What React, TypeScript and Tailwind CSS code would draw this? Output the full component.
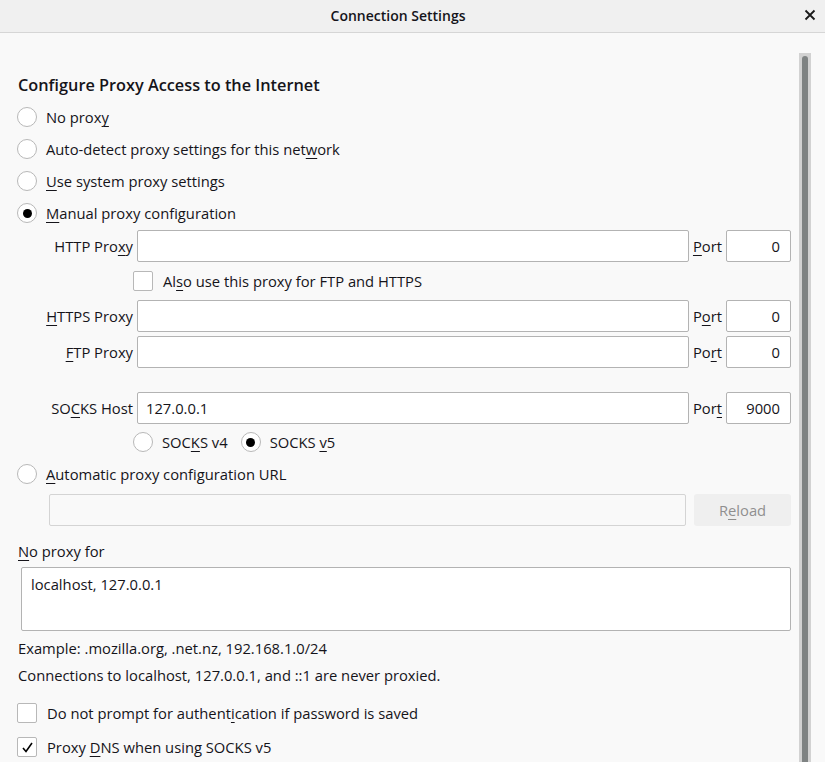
import React from "react";

const U = ({ children }: { children: React.ReactNode }) => (
  <span className="underline decoration-1 underline-offset-[3px]">{children}</span>
);

const Radio = ({ checked = false }: { checked?: boolean }) => (
  <span className="flex h-[20px] w-[20px] shrink-0 items-center justify-center rounded-full border border-[#b8b8b8] bg-white">
    {checked && <span className="h-[9px] w-[9px] rounded-full bg-black" />}
  </span>
);

const Check = ({ checked = false }: { checked?: boolean }) => (
  <span className="flex h-[20px] w-[20px] shrink-0 items-center justify-center rounded-[2px] border border-[#b8b8b8] bg-white">
    {checked && (
      <svg width="13" height="13" viewBox="0 0 13 13">
        <path d="M2 7 L5 10.5 L11 2" fill="none" stroke="#000" strokeWidth="1.6" />
      </svg>
    )}
  </span>
);

const Input = ({ value = "", right = false, w = "flex-1" }: { value?: string; right?: boolean; w?: string }) => (
  <div
    className={`${w} flex h-[32px] items-center rounded-[2px] border border-[#b3b3b3] bg-white px-[8px] ${
      right ? "justify-end pr-[10px]" : ""
    }`}
  >
    {value}
  </div>
);

const ProxyRow = ({
  label,
  port,
  value = "",
  portLabel,
  className = "",
}: {
  label: React.ReactNode;
  port: string;
  value?: string;
  portLabel: React.ReactNode;
  className?: string;
}) => (
  <div className={`flex h-[32px] items-center ${className}`}>
    <div className="w-[120px] shrink-0 pr-[4px] text-right">{label}</div>
    <Input value={value} />
    <div className="px-[4px]">{portLabel}</div>
    <Input value={port} right w="w-[65px]" />
  </div>
);

export default function App() {
  return (
    <div
      className="h-[762px] w-[825px] overflow-hidden bg-[#f9f9f9] text-[14.75px] text-[#15141a]"
      style={{ fontFamily: '"Open Sans", "Noto Sans", sans-serif' }}
    >
      <div className="flex h-[33px] items-center border-b border-[#d6d6d6] bg-[#f0f0f0] pb-[2px]">
        <div className="flex-1 text-center text-[14px] font-semibold">Connection Settings</div>
        <div className="flex w-[29px] items-center justify-center pr-[2px]">
          <svg width="12" height="12" viewBox="0 0 12 12">
            <path d="M1.5 1.5 L10.5 10.5 M10.5 1.5 L1.5 10.5" stroke="#1a1a1a" strokeWidth="1.8" />
          </svg>
        </div>
      </div>
      <div className="flex h-[729px]">
        <div className="flex-1 pl-[17px] pr-[8px] pt-[36px]">
          <div className="flex h-[32px] items-center pl-[1px] text-[16.3px] font-semibold">
            Configure Proxy Access to the Internet
          </div>
          {[
            { l: <>No prox<U>y</U></>, c: false },
            { l: <>Auto-detect proxy settings for this net<U>w</U>ork</>, c: false },
            { l: <><U>U</U>se system proxy settings</>, c: false },
            { l: <><U>M</U>anual proxy configuration</>, c: true },
          ].map((r, i) => (
            <div key={i} className="flex h-[32px] items-center gap-[9px]">
              <Radio checked={r.c} />
              <span>{r.l}</span>
            </div>
          ))}
          <ProxyRow
            className="mt-[1px]"
            label={<>HTTP Pro<U>x</U>y</>}
            port="0"
            portLabel={<><U>P</U>ort</>}
          />
          <div className="flex h-[38px] items-center gap-[10px] pl-[116px]">
            <Check />
            <span>Al<U>s</U>o use this proxy for FTP and HTTPS</span>
          </div>
          <ProxyRow label={<><U>H</U>TTPS Proxy</>} port="0" portLabel={<>P<U>o</U>rt</>} />
          <ProxyRow className="mt-[4px]" label={<><U>F</U>TP Proxy</>} port="0" portLabel={<>Po<U>r</U>t</>} />
          <ProxyRow
            className="mt-[24px]"
            label={<>SO<U>C</U>KS Host</>}
            value="127.0.0.1"
            port="9000"
            portLabel={<>Por<U>t</U></>}
          />
          <div className="mt-[2px] flex h-[32px] items-center pl-[116px]">
            <Radio />
            <span className="ml-[9px]">SOC<U>K</U>S v4</span>
            <span className="ml-[13px]"><Radio checked /></span>
            <span className="ml-[9px]">SOCKS <U>v</U>5</span>
          </div>
          <div className="flex h-[32px] items-center gap-[9px]">
            <Radio />
            <span><U>A</U>utomatic proxy configuration URL</span>
          </div>
          <div className="mt-[4px] flex h-[32px] items-stretch pl-[32px]">
            <div className="flex-1 rounded-[2px] border border-[#d4d4d4] bg-[#f9f9f9]" />
            <div className="ml-[8px] flex w-[97px] items-center justify-center rounded-[3px] bg-[#efefef] text-[#8f8f8f]">
              R<U>e</U>load
            </div>
          </div>
          <div className="mt-[15px] flex h-[20px] items-center pl-[1px]">
            <span><U>N</U>o proxy for</span>
          </div>
          <div className="ml-[4px] mt-[6px] h-[64px] rounded-[2px] border border-[#b3b3b3] bg-white pl-[9px] pt-[5px]">
            localhost, 127.0.0.1
          </div>
          <div className="mt-[7px] flex h-[20px] items-center pl-[1px]">
            Example: .mozilla.org, .net.nz, 192.168.1.0/24
          </div>
          <div className="mt-[7px] flex h-[20px] items-center pl-[1px]">
            Connections to localhost, 127.0.0.1, and ::1 are never proxied.
          </div>
          <div className="mt-[17px] flex h-[22px] items-center gap-[10px]">
            <Check />
            <span>Do not prompt for authent<U>i</U>cation if password is saved</span>
          </div>
          <div className="mt-[12px] flex h-[22px] items-center gap-[10px]">
            <Check checked />
            <span>Proxy <U>D</U>NS when using SOCKS v5</span>
          </div>
        </div>
        <div className="mt-[20px] flex w-[12px] justify-center bg-[#d2d2d2] pt-[3px]">
          <div className="w-[6px] rounded-t-full bg-[#7f8383]" />
        </div>
        <div className="w-[14px]" />
      </div>
    </div>
  );
}
